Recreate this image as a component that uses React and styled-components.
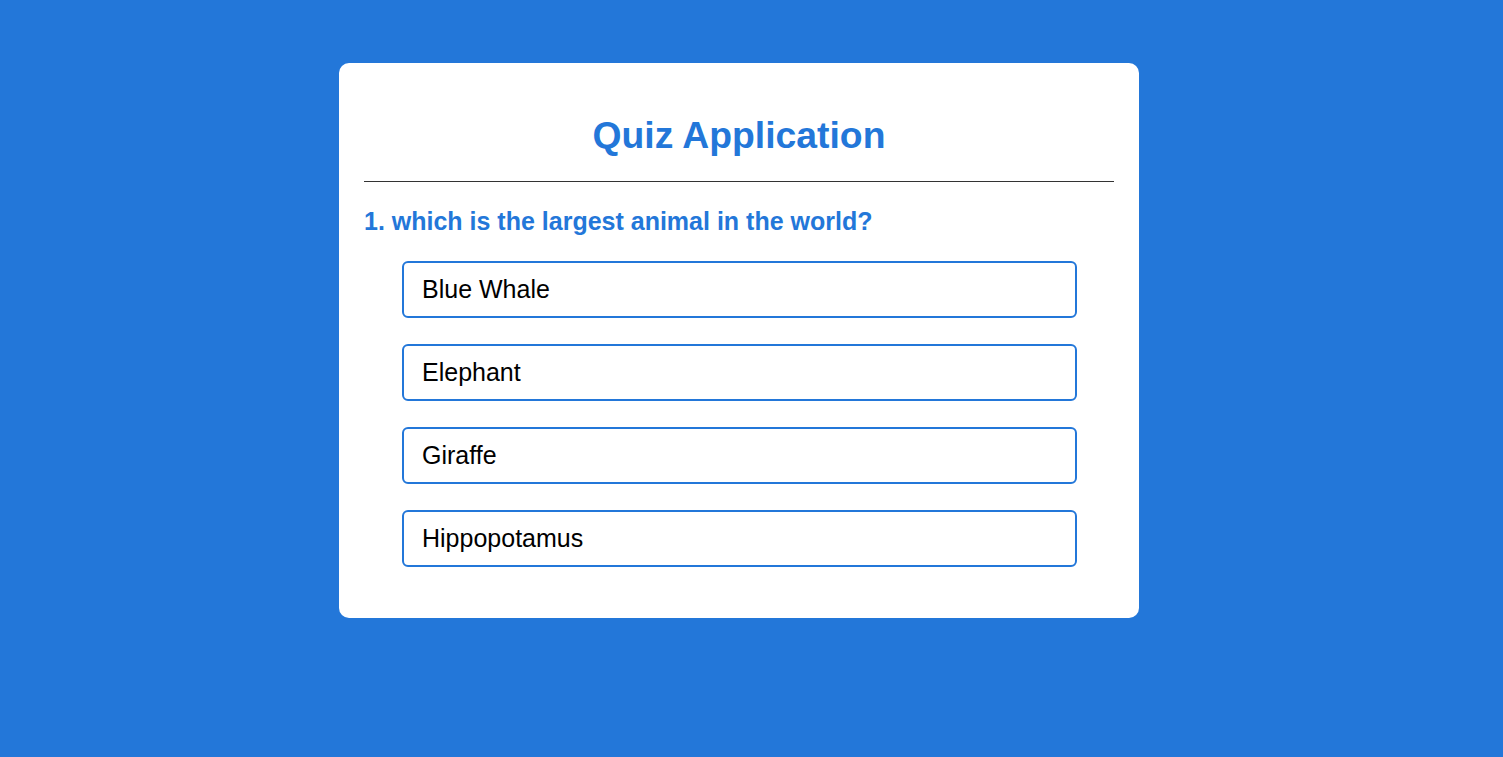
import React from 'react';
import styled, { createGlobalStyle } from 'styled-components';

const GlobalStyle = createGlobalStyle`
  html, body {
    margin: 0;
    padding: 0;
    background: #2377d9;
    font-family: 'Liberation Sans', Arial, sans-serif;
  }
`;

const Page = styled.div`
  min-height: 100vh;
  padding: 63px 0 0 339px;
  box-sizing: border-box;
`;

const Card = styled.div`
  width: 800px;
  box-sizing: border-box;
  background: #ffffff;
  border-radius: 10px;
  padding: 25px;
`;

const Title = styled.h1`
  margin: 26px 0 24px;
  text-align: center;
  color: #2377d9;
  font-size: 37.3px;
  font-weight: 700;
  line-height: 43px;
`;

const Divider = styled.hr`
  margin: 0;
  border: none;
  height: 1px;
  background: #333333;
`;

const Question = styled.h2`
  margin: 25px 0 25px;
  color: #2377d9;
  font-size: 25px;
  font-weight: 700;
  line-height: 29px;
`;

const Options = styled.ul`
  list-style: none;
  margin: 0 37px 0 38px;
  padding: 0;
`;

const Option = styled.li`
  height: 57px;
  box-sizing: border-box;
  display: flex;
  align-items: center;
  padding: 0 18px;
  margin-bottom: 26px;
  border: 2px solid #2377d9;
  border-radius: 6px;
  font-size: 25px;
  color: #000000;
  cursor: pointer;
`;

const options = ['Blue Whale', 'Elephant', 'Giraffe', 'Hippopotamus'];

const App = () => {
  return (
    <>
      <GlobalStyle />
      <Page>
        <Card>
          <Title>Quiz Application</Title>
          <Divider />
          <Question>1. which is the largest animal in the world?</Question>
          <Options>
            {options.map((opt) => (
              <Option key={opt}>{opt}</Option>
            ))}
          </Options>
        </Card>
      </Page>
    </>
  );
};

export default App;
